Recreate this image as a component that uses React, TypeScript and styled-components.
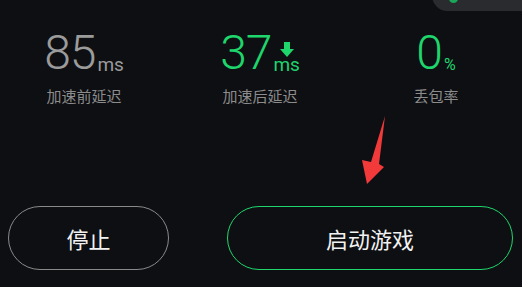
import styled, { createGlobalStyle } from "styled-components";

const GlobalStyle = createGlobalStyle`
  html, body {
    margin: 0;
    padding: 0;
    background: #0e0f13;
  }
  body {
    font-family: Roboto, "Noto Sans CJK SC", sans-serif;
  }
`;

type Stat = {
  value: string;
  unit: string;
  label: string;
  green: boolean;
  dropped?: boolean;
};

const stats: Stat[] = [
  { value: "85", unit: "ms", label: "加速前延迟", green: false },
  { value: "37", unit: "ms", label: "加速后延迟", green: true, dropped: true },
  { value: "0", unit: "%", label: "丢包率", green: true },
];

export default function App() {
  return (
    <>
      <GlobalStyle />
      <Screen>
        <CornerTab>
          <CornerDot />
        </CornerTab>
        <StatsRow>
          {stats.map((s) => (
            <StatCell key={s.label}>
              <ValueLine $green={s.green}>
                <Number>{s.value}</Number>
                <UnitBox>
                  {s.dropped && (
                    <svg width="14" height="15" viewBox="0 0 14 15">
                      <path d="M4 0h6v7h4l-7 8-7-8h4z" fill="#1ed66b" />
                    </svg>
                  )}
                  <Unit $small={s.unit === "%"}>{s.unit}</Unit>
                </UnitBox>
              </ValueLine>
              <Label>{s.label}</Label>
            </StatCell>
          ))}
        </StatsRow>
        <Pointer viewBox="0 0 40 80" width="40" height="80">
          <polygon
            points="30,6 24,54 29,57 12,74 7,50 16,52"
            fill="#f23a3a"
          />
        </Pointer>
        <ButtonRow>
          <StopButton>停止</StopButton>
          <StartButton>启动游戏</StartButton>
        </ButtonRow>
      </Screen>
    </>
  );
}

const Screen = styled.div`
  position: relative;
  width: 522px;
  height: 287px;
  background: #0e0f13;
  overflow: hidden;
  display: flex;
  flex-direction: column;
`;

const CornerTab = styled.div`
  position: absolute;
  top: -20px;
  left: 432px;
  width: 120px;
  height: 31px;
  background: #2a2b2f;
  border-radius: 16px;
`;

const CornerDot = styled.div`
  position: absolute;
  left: 17px;
  top: 14px;
  width: 9px;
  height: 9px;
  border-radius: 50%;
  background: #1aa558;
`;

const StatsRow = styled.div`
  display: grid;
  grid-template-columns: 176px 176px 176px;
  padding-top: 29px;
  margin-left: -4px;
`;

const StatCell = styled.div`
  display: flex;
  flex-direction: column;
  align-items: center;
`;

const ValueLine = styled.div<{ $green: boolean }>`
  display: flex;
  align-items: flex-end;
  color: ${(p) => (p.$green ? "#1ed66b" : "#9b9b9b")};
  height: 48px;
`;

const Number = styled.span`
  font-family: Roboto, sans-serif;
  font-weight: 300;
  font-size: 48px;
  line-height: 48px;
  letter-spacing: -1px;
`;

const UnitBox = styled.span`
  display: flex;
  flex-direction: column;
  align-items: center;
  margin-left: 2px;
  padding-bottom: 4px;
`;

const Unit = styled.span<{ $small: boolean }>`
  font-family: Roboto, sans-serif;
  font-size: ${(p) => (p.$small ? "16px" : "19px")};
  line-height: 16px;
`;

const Label = styled.div`
  margin-top: 10px;
  font-family: "Noto Sans CJK SC", sans-serif;
  font-size: 15px;
  line-height: 18px;
  color: #8c8c8c;
`;

const Pointer = styled.svg`
  position: absolute;
  left: 355px;
  top: 110px;
`;

const ButtonRow = styled.div`
  margin-top: auto;
  display: flex;
  gap: 58px;
  padding: 0 9px 17px 8px;
`;

const PillButton = styled.button`
  height: 64px;
  border-radius: 32px;
  background: transparent;
  color: #f2f2f2;
  font-family: "Noto Sans CJK SC", sans-serif;
  font-size: 22px;
  cursor: pointer;
`;

const StopButton = styled(PillButton)`
  width: 161px;
  border: 1.5px solid #8a8a8a;
`;

const StartButton = styled(PillButton)`
  flex: 1;
  border: 1.5px solid #1ed66b;
`;
